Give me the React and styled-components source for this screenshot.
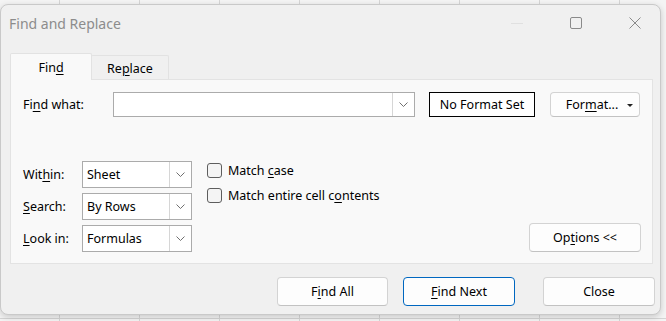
import React from 'react'
import styled, { createGlobalStyle } from 'styled-components'

const GlobalStyle = createGlobalStyle`
  html, body {
    margin: 0;
    padding: 0;
  }
  body {
    width: 666px;
    height: 321px;
    overflow: hidden;
    font-family: "Noto Sans", "Open Sans", sans-serif;
    color: #1b1b1b;
    background-color: #f4f4f4;
    background-image:
      linear-gradient(to bottom, transparent 318px, #d4d4d4 318px, #d4d4d4 319px, transparent 319px),
      linear-gradient(to right, #d6d6d6 1px, transparent 1px);
    background-size: 100% 100%, 80px 100%;
    background-position: 0 0, 59px 0;
  }
`

const Screen = styled.div`
  padding-top: 4px;
`

const Dialog = styled.div`
  box-sizing: border-box;
  width: 661px;
  height: 311px;
  background: #f0f0f0;
  border: 1px solid #c9c9c9;
  border-radius: 8px;
  box-shadow: 0 2px 6px rgba(0, 0, 0, 0.18);
  display: flex;
  flex-direction: column;
`

const TitleBar = styled.div`
  height: 36px;
  display: flex;
  align-items: center;
  padding: 0 2px 0 8px;
`

const Title = styled.div`
  flex: 1;
  font-size: 14px;
  color: #8c8c8c;
  padding-top: 1px;
`

const Controls = styled.div`
  display: flex;
  gap: 13px;
  height: 100%;
`

const ControlBtn = styled.div`
  width: 46px;
  display: flex;
  align-items: center;
  justify-content: center;
  color: ${p => (p.$disabled ? '#e0e0e0' : '#8a8a8a')};
`

const Body = styled.div`
  padding: 0 7px 0 9px;
`

const Tabs = styled.div`
  margin-top: 11px;
  display: flex;
  align-items: flex-end;
  height: 27px;
`

const Tab = styled.div`
  box-sizing: border-box;
  position: relative;
  z-index: ${p => (p.$active ? 2 : 1)};
  width: ${p => p.$width}px;
  height: ${p => (p.$active ? 27 : 24)}px;
  margin-left: ${p => (p.$active ? 0 : -1)}px;
  margin-bottom: ${p => (p.$active ? -1 : 0)}px;
  background: ${p => (p.$active ? '#f9f9f9' : '#f0f0f0')};
  border: 1px solid #e2e2e2;
  border-bottom: none;
  border-radius: 2px 2px 0 0;
  display: flex;
  align-items: center;
  justify-content: center;
  font-size: 12.5px;
  color: #000;
  padding-top: 1px;
`

const Panel = styled.div`
  box-sizing: border-box;
  height: 185px;
  background: #f9f9f9;
  border: 1px solid #e3e3e3;
  padding: 12px 11px 11px 12px;
  display: flex;
  flex-direction: column;
`

const FindRow = styled.div`
  display: flex;
  align-items: center;
  height: 25px;
`

const Label = styled.div`
  width: ${p => p.$width}px;
  flex-shrink: 0;
  font-size: 12.5px;
  color: #000;
`

const U = styled.span`
  text-decoration: underline;
  text-underline-offset: 2px;
  text-decoration-thickness: 1px;
`

const Combo = styled.div`
  box-sizing: border-box;
  width: ${p => p.$width}px;
  height: ${p => p.$height}px;
  background: #fff;
  border: 1px solid #ababab;
  display: flex;
  align-items: stretch;
`

const ComboValue = styled.div`
  flex: 1;
  display: flex;
  align-items: center;
  padding-left: 4px;
  font-size: 12.5px;
  color: #000;
`

const ComboArrow = styled.div`
  width: 21px;
  border-left: 1px solid #d6d6d6;
  display: flex;
  align-items: center;
  justify-content: center;
  color: #606060;
`

const FormatBox = styled.div`
  box-sizing: border-box;
  width: 106px;
  height: 25px;
  margin-left: 14px;
  border: 1px solid #000;
  background: #fff;
  display: flex;
  align-items: center;
  justify-content: center;
  font-size: 12.5px;
  color: #000;
`

const Button = styled.div`
  box-sizing: border-box;
  width: ${p => p.$width}px;
  height: ${p => p.$height}px;
  background: #fdfdfd;
  border: 1px solid ${p => (p.$primary ? '#0067c0' : '#d3d3d3')};
  border-bottom-color: ${p => (p.$primary ? '#0067c0' : '#c2c2c2')};
  border-radius: 4px;
  display: flex;
  align-items: center;
  justify-content: center;
  font-size: 12.5px;
  color: #000;
  position: relative;
`

const FormatButton = styled(Button)`
  margin-left: 15px;
  padding-right: 6px;
`

const Caret = styled.span`
  position: absolute;
  right: 6px;
  top: 11px;
  width: 0;
  height: 0;
  border-left: 3px solid transparent;
  border-right: 3px solid transparent;
  border-top: 3px solid #222;
`

const Options = styled.div`
  margin-top: 44px;
  display: flex;
  align-items: flex-start;
  flex: 1;
`

const SelectGrid = styled.div`
  display: grid;
  grid-template-columns: 59px 110px;
  row-gap: 5px;
  align-items: center;
`

const Checks = styled.div`
  margin-left: 15px;
  display: flex;
  flex-direction: column;
  gap: 10px;
  padding-top: 2px;
`

const CheckRow = styled.div`
  display: flex;
  align-items: center;
  gap: 6px;
  font-size: 12.5px;
  color: #000;
  height: 15px;
`

const Box = styled.div`
  box-sizing: border-box;
  width: 15px;
  height: 15px;
  border: 1px solid #5e5e5e;
  border-radius: 3px;
  background: #f4f4f4;
`

const OptionsButton = styled(Button)`
  margin-left: auto;
  align-self: flex-end;
`

const ButtonRow = styled.div`
  display: flex;
  justify-content: flex-end;
  margin: 13px -2px 0 0;
`

const Chevron = () => (
  <svg width="9" height="6" viewBox="0 0 9 6">
    <polyline points="0.5,0.5 4.5,4.5 8.5,0.5" fill="none" stroke="currentColor" strokeWidth="0.9" />
  </svg>
)

const Select = ({ value }) => (
  <Combo $width={110} $height={27}>
    <ComboValue>{value}</ComboValue>
    <ComboArrow><Chevron /></ComboArrow>
  </Combo>
)

export default function App() {
  return (
    <>
      <GlobalStyle />
      <Screen>
        <Dialog>
          <TitleBar>
            <Title>Find and Replace</Title>
            <Controls>
              <ControlBtn $disabled>
                <svg width="12" height="12" viewBox="0 0 12 12">
                  <line x1="0" y1="6.5" x2="12" y2="6.5" stroke="currentColor" strokeWidth="1" />
                </svg>
              </ControlBtn>
              <ControlBtn>
                <svg width="12" height="12" viewBox="0 0 12 12">
                  <rect x="0.5" y="0.5" width="11" height="11" rx="1.5" fill="none" stroke="currentColor" strokeWidth="1" />
                </svg>
              </ControlBtn>
              <ControlBtn>
                <svg width="12" height="12" viewBox="0 0 12 12">
                  <path d="M0.5 0.5 L11.5 11.5 M11.5 0.5 L0.5 11.5" stroke="currentColor" strokeWidth="1" />
                </svg>
              </ControlBtn>
            </Controls>
          </TitleBar>
          <Body>
            <Tabs>
              <Tab $active $width={82}><span>Fin<U>d</U></span></Tab>
              <Tab $width={78}><span>Re<U>p</U>lace</span></Tab>
            </Tabs>
            <Panel>
              <FindRow>
                <Label $width={90}>Fi<U>n</U>d what:</Label>
                <Combo $width={302} $height={25}>
                  <ComboValue />
                  <ComboArrow><Chevron /></ComboArrow>
                </Combo>
                <FormatBox>No Format Set</FormatBox>
                <FormatButton $width={90} $height={25}>
                  <span>For<U>m</U>at...</span>
                  <Caret />
                </FormatButton>
              </FindRow>
              <Options>
                <SelectGrid>
                  <Label>Wit<U>h</U>in:</Label>
                  <Select value="Sheet" />
                  <Label><U>S</U>earch:</Label>
                  <Select value="By Rows" />
                  <Label><U>L</U>ook in:</Label>
                  <Select value="Formulas" />
                </SelectGrid>
                <Checks>
                  <CheckRow><Box /><span>Match <U>c</U>ase</span></CheckRow>
                  <CheckRow><Box /><span>Match entire cell c<U>o</U>ntents</span></CheckRow>
                </Checks>
                <OptionsButton $width={112} $height={29}><span>Op<U>t</U>ions &lt;&lt;</span></OptionsButton>
              </Options>
            </Panel>
            <ButtonRow>
              <Button $width={111} $height={29}><span>F<U>i</U>nd All</span></Button>
              <Button $width={112} $height={29} $primary style={{ marginLeft: 15 }}><span><U>F</U>ind Next</span></Button>
              <Button $width={112} $height={29} style={{ marginLeft: 28 }}>Close</Button>
            </ButtonRow>
          </Body>
        </Dialog>
      </Screen>
    </>
  )
}
